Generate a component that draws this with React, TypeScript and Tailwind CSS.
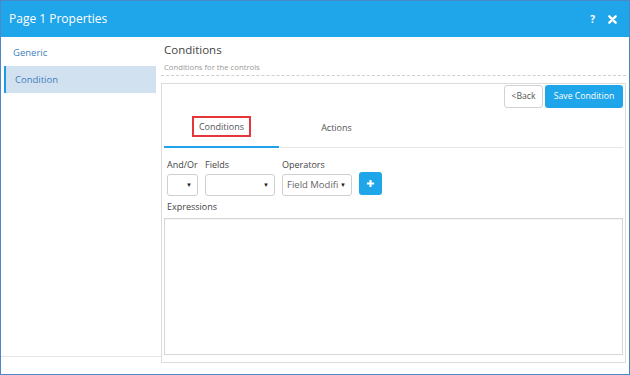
import { useState } from 'react'

const SelectBox = ({ width, value }: { width: string; value?: string }) => (
  <div
    className={`${width} h-[22px] border border-[#cfcfcf] rounded-[3px] bg-white flex items-center pl-[4px] pr-[5px] gap-[2px]`}
  >
    <div className="flex-1 min-w-0 overflow-hidden">
      <div className="text-[9.5px] text-[#666] whitespace-nowrap leading-[12px] w-max">{value}</div>
    </div>
    <span className="text-[6px] text-[#222] leading-none">▼</span>
  </div>
)

export default function App() {
  const [tab, setTab] = useState<'conditions' | 'actions'>('conditions')
  const [page, setPage] = useState<'generic' | 'condition'>('condition')

  return (
    <div
      className="w-[630px] h-[375px] border border-[#4a88c9] bg-white flex flex-col overflow-hidden"
      style={{ fontFamily: '"Open Sans", "Noto Sans", sans-serif' }}
    >
      {/* header */}
      <div className="h-[36px] shrink-0 bg-[#1fa5ea] flex items-center justify-between pl-[8px] pr-[12px]">
        <span className="text-white text-[12px] leading-none">Page 1 Properties</span>
        <div className="flex items-center gap-[13px]">
          <span className="text-white text-[10px] font-bold leading-none">?</span>
          <svg width="9" height="9" viewBox="0 0 10 10">
            <path d="M1.5 1.5 L8.5 8.5 M8.5 1.5 L1.5 8.5" stroke="#fff" strokeWidth="2.6" strokeLinecap="round" />
          </svg>
        </div>
      </div>

      <div className="flex-1 flex min-h-0">
        {/* sidebar */}
        <div className="w-[160px] shrink-0 flex flex-col">
          <div className="pl-[3px] pr-[5px] pt-[3px] flex flex-col">
            <button
              onClick={() => setPage('generic')}
              className={`h-[26px] flex items-center text-left text-[9.5px] text-[#3d7fc0] ${
                page === 'generic' ? 'bg-[#d1e1ef] border-l-2 border-[#1d9ce5] pl-[9px]' : 'pl-[9px]'
              }`}
            >
              Generic
            </button>
            <button
              onClick={() => setPage('condition')}
              className={`h-[27px] flex items-center text-left text-[9.5px] text-[#3d7fc0] ${
                page === 'condition' ? 'bg-[#d1e1ef] border-l-2 border-[#1d9ce5] pl-[9px] pt-[1px]' : 'pl-[11px]'
              }`}
            >
              Condition
            </button>
          </div>
          <div className="flex-1" />
          <div className="h-[18px] border-t border-[#e6e6e6]" />
        </div>

        {/* content */}
        <div className="flex-1 flex flex-col pr-[3px] pb-[11px] min-w-0">
          <div className="pl-[3px] pt-[5px] pb-[2px] border-b border-dashed border-[#cfcfcf]">
            <div className="text-[11.5px] leading-[16px] text-[#444]">Conditions</div>
            <div className="mt-[4px] text-[7.7px] leading-[11px] text-[#999]">Conditions for the controls</div>
          </div>

          <div className="mt-[7px] flex-1 border border-[#dcdcdc] flex flex-col px-[2px] pb-[7px] min-h-0">
            <div className="flex justify-end gap-[2px] pt-[1px]">
              <button className="w-[39px] h-[23px] border border-[#d2d2d2] rounded-[3px] bg-white text-[8.7px] text-[#555]">
                &lt;Back
              </button>
              <button className="w-[78px] h-[23px] rounded-[3px] bg-[#1fa5ea] text-[8.7px] text-white">
                Save Condition
              </button>
            </div>

            <div className="flex border-b border-[#e6e6e6]">
              <button
                onClick={() => setTab('conditions')}
                className={`w-[115px] h-[40px] -mb-px flex items-center justify-center text-[9px] text-[#555] ${
                  tab === 'conditions' ? 'border-b-2 border-[#1fa2e8]' : ''
                }`}
              >
                <span className="border-2 border-[#e4363b] px-[5px] h-[21px] flex items-center mt-[-1px]">Conditions</span>
              </button>
              <button
                onClick={() => setTab('actions')}
                className={`w-[115px] h-[40px] -mb-px flex items-center justify-center text-[9px] text-[#555] ${
                  tab === 'actions' ? 'border-b-2 border-[#1fa2e8]' : ''
                }`}
              >
                <span className="mt-[-1px]">Actions</span>
              </button>
            </div>

            <div className="px-[3px] pt-[11px] flex items-end gap-[7px]">
              <div className="flex flex-col gap-[3px]">
                <span className="text-[9px] leading-[12px] text-[#444]">And/Or</span>
                <SelectBox width="w-[31px]" />
              </div>
              <div className="flex flex-col gap-[3px]">
                <span className="text-[9px] leading-[12px] text-[#444]">Fields</span>
                <SelectBox width="w-[70px]" />
              </div>
              <div className="flex flex-col gap-[3px]">
                <span className="text-[9px] leading-[12px] text-[#444]">Operators</span>
                <SelectBox width="w-[70px]" value="Field Modifier" />
              </div>
              <button className="w-[23px] h-[23px] mb-[1px] rounded-[3px] bg-[#1fa5ea] flex items-center justify-center">
                <svg width="9" height="9" viewBox="0 0 10 10">
                  <path d="M5 1 V9 M1 5 H9" stroke="#fff" strokeWidth="2.4" />
                </svg>
              </button>
            </div>

            <div className="px-[3px] mt-[5px] text-[9px] leading-[12px] text-[#444]">Expressions</div>
            <div className="mt-[5px] flex-1 border border-[#d6d6d6] shadow-[inset_0_1px_1px_rgba(0,0,0,0.04)]" />
          </div>
        </div>
      </div>
    </div>
  )
}
